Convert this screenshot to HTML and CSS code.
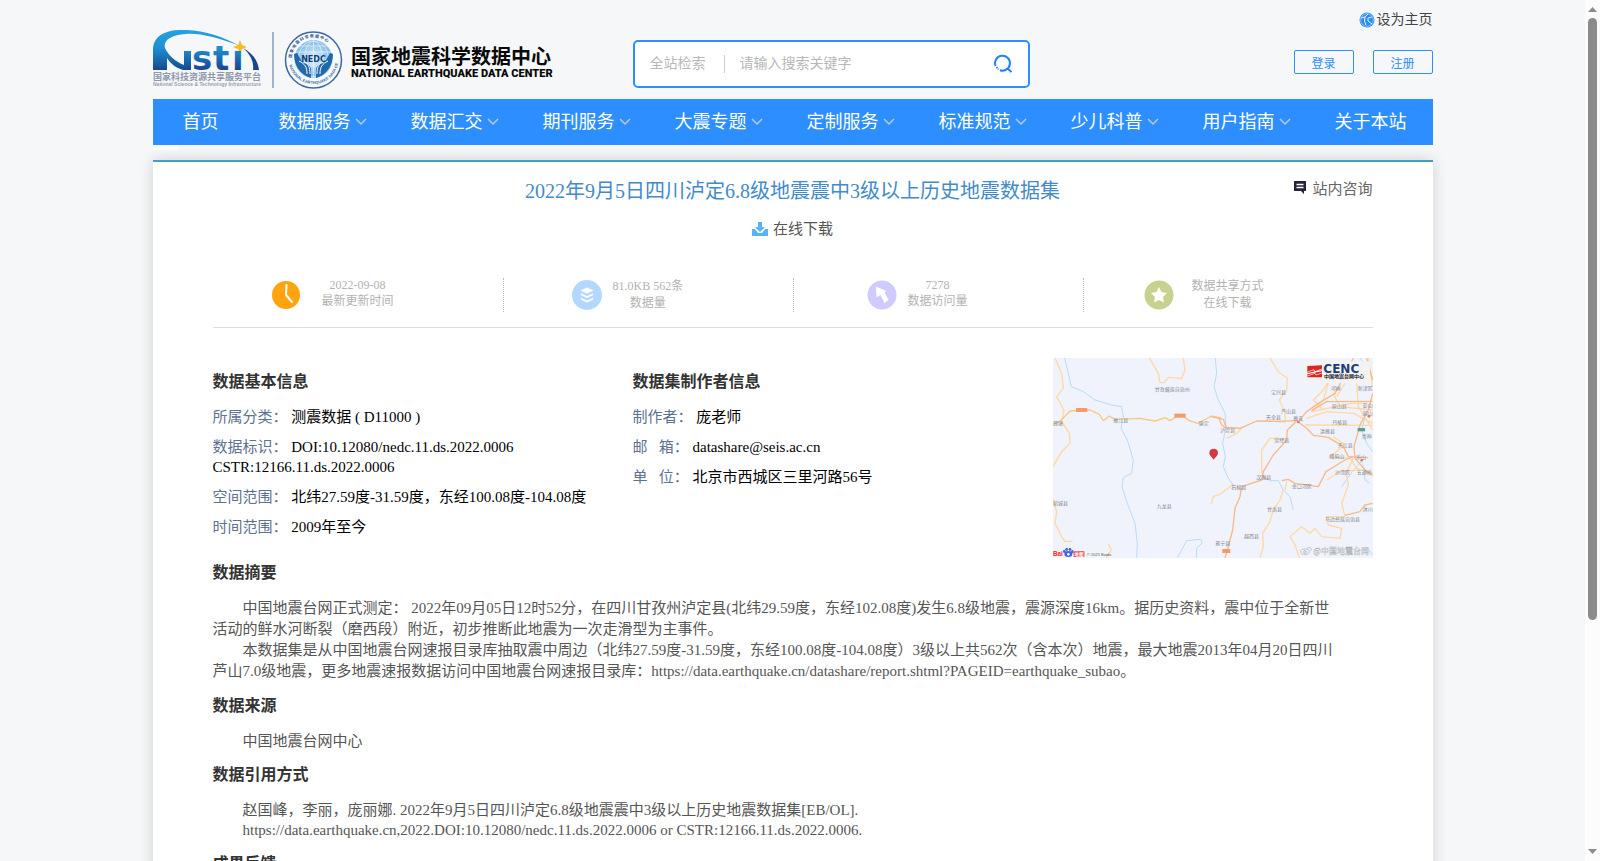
FILE: index.html
```html
<!DOCTYPE html>
<html lang="zh-CN">
<head>
<meta charset="utf-8">
<title>国家地震科学数据中心</title>
<link rel="stylesheet" href="styles.css">
</head>
<body>
<div class="viewport">
<div class="page">
  <header class="header">
    <a class="brand" href="#" aria-label="国家地震科学数据中心">
      <svg class="brand-art" viewBox="0 0 410 60" width="410" height="60" role="img">
        <defs>
          <linearGradient id="swoosh" gradientUnits="userSpaceOnUse" x1="0" y1="0" x2="0" y2="40">
            <stop offset="0" stop-color="#23a3e3"/><stop offset="0.450" stop-color="#1e8fd2"/><stop offset="1" stop-color="#17478f"/>
          </linearGradient>
          <radialGradient id="globe"><stop offset="0" stop-color="#e4f3fb"/><stop offset="1" stop-color="#7dbce4"/></radialGradient>
        </defs>
        <path fill="url(#swoosh)" d="M0 40V18C1 7 10 1 25 0C46 -1 67 5 87 16C66 8 47 3 33 4C17 5 10 11 12 18C15 25 23 32 31 35V21H38V40H30C23 38 17 33 14 28V40Z"/>
        <path fill="#17478f" d="M90 18C99 23 105 30 106 40H100C101 32 98 25 90 18Z"/>
        <path fill="#f5bd22" d="M87 10L89 15L94 17L89 19L87 24L85 19L80 17L85 15Z"/>
        <text class="logo-letters" y="40" fill="url(#swoosh)"><tspan x="39">s</tspan><tspan x="60">t</tspan><tspan x="79">ı</tspan></text>
        <text class="logo-cn" x="0" y="50">国家科技资源共享服务平台</text>
        <text class="logo-en" x="0" y="56">National Science &amp; Technology Infrastructure</text>
        <path stroke="#9fb2cf" stroke-width="2" d="M120 2V58"/>
        <circle cx="160.500" cy="30" r="28" fill="#f8fbfe" stroke="#3d689f" stroke-width="1.500"/>
        <circle cx="160.500" cy="29" r="18.500" fill="url(#globe)" stroke="#8cc1e4"/>
        <g fill="none" stroke="#fff" stroke-width=".7" opacity=".8"><ellipse cx="160.500" cy="29" rx="9" ry="18"/><ellipse cx="160.500" cy="29" rx="15" ry="18"/><path d="M142 22H179M142 36H179M146 16H175M160.500 11V47"/></g>
        <path fill="#2269aa" d="M141 24C141 35 147 45 158 48V39C156 32 150 35 148 30L144 23ZM180 24C180 35 174 45 163 48V39C165 32 171 35 173 30L177 23Z"/>
        <path fill="none" stroke="#fff" stroke-width="1" d="M146 31C152 34 154 37 154 44M150 30C155 33 157 37 157 44M175 31C169 34 167 37 167 44M171 30C166 33 164 37 164 44"/>
        <text class="seal-name" x="160.500" y="32" text-anchor="middle">NEDC</text>
        <path id="seal-top" fill="none" d="M139.500 36A22 22 0 1 1 181.500 36"/>
        <path id="seal-bottom" fill="none" d="M136 34A25 25 0 0 0 185 34"/>
        <text class="seal-ring"><textPath href="#seal-top" startOffset="8">国 家 地 震 科 学 数 据 中 心</textPath></text>
        <text class="seal-ring-en"><textPath href="#seal-bottom" startOffset="1">NATIONAL EARTHQUAKE DATA CENTER</textPath></text>
        <text class="center-cn" x="198" y="34">国家地震科学数据中心</text>
        <text class="center-en" x="198" y="47">NATIONAL EARTHQUAKE DATA CENTER</text>
      </svg>
    </a>
    <form class="search">
      <span class="search-scope">全站检索</span>
      <input class="search-input" type="text" placeholder="请输入搜索关键字" aria-label="请输入搜索关键字">
      <button class="search-button" type="button" aria-label="搜索">
        <svg viewBox="0 0 20 20" width="20" height="20" fill="none" stroke="#2080ff" stroke-width="2"><path d="M2.500 12A7.500 7.500 0 1 1 7 16.300A7.500 7.500 0 0 0 14.500 14.500L18.500 18"/><path d="M3.500 13L5.500 15.500" stroke-dasharray="1.500 1"/></svg>
      </button>
    </form>
    <div class="account">
      <a class="home-link" href="#">
        <svg viewBox="0 0 16 16" width="16" height="16"><circle cx="8" cy="8" r="7.500" fill="#2d8cf0"/><g fill="none" stroke="#e5f3ff" stroke-width="1"><circle cx="8" cy="8" r="6.300" stroke-width=".5"/><path d="M2 6L6 5L9 2M6 5L5.500 9L7 13M9 6L13 5M9 6V9L13 12"/></g></svg>
        <span>设为主页</span>
      </a>
      <div class="account-buttons">
        <button class="outline-button" type="button">登录</button>
        <button class="outline-button" type="button">注册</button>
      </div>
    </div>
  </header>

  <nav class="nav">
    <a class="nav-item" href="#">首页</a>
    <a class="nav-item has-menu" href="#">数据服务<svg class="chevron" viewBox="0 0 12 8"><path d="M1 1L6 6L11 1"/></svg></a>
    <a class="nav-item has-menu" href="#">数据汇交<svg class="chevron" viewBox="0 0 12 8"><path d="M1 1L6 6L11 1"/></svg></a>
    <a class="nav-item has-menu" href="#">期刊服务<svg class="chevron" viewBox="0 0 12 8"><path d="M1 1L6 6L11 1"/></svg></a>
    <a class="nav-item has-menu" href="#">大震专题<svg class="chevron" viewBox="0 0 12 8"><path d="M1 1L6 6L11 1"/></svg></a>
    <a class="nav-item has-menu" href="#">定制服务<svg class="chevron" viewBox="0 0 12 8"><path d="M1 1L6 6L11 1"/></svg></a>
    <a class="nav-item has-menu" href="#">标准规范<svg class="chevron" viewBox="0 0 12 8"><path d="M1 1L6 6L11 1"/></svg></a>
    <a class="nav-item has-menu" href="#">少儿科普<svg class="chevron" viewBox="0 0 12 8"><path d="M1 1L6 6L11 1"/></svg></a>
    <a class="nav-item has-menu" href="#">用户指南<svg class="chevron" viewBox="0 0 12 8"><path d="M1 1L6 6L11 1"/></svg></a>
    <a class="nav-item last" href="#">关于本站</a>
  </nav>
  <div class="nav-marker"></div>

  <main class="card">
    <div class="title-row">
      <h1 class="title">2022年9月5日四川泸定6.8级地震震中3级以上历史地震数据集</h1>
      <a class="consult" href="#">
        <svg viewBox="0 0 14 14" width="14" height="14"><path fill="#262338" d="M1 1H13V11H11V14L8 11H1Z"/><path stroke="#fff" stroke-width="1.500" d="M3.500 4.500H10.500M3.500 7.500H10.500"/></svg>
        <span>站内咨询</span>
      </a>
    </div>
    <a class="download" href="#">
      <svg viewBox="0 0 16 14" width="16" height="14" fill="#56b4f5"><path d="M6 0H10V5H13L8 10L3 5H6Z"/><path d="M0 7H3L6 11H10L13 7H16V14H0Z"/></svg>
      <span>在线下载</span>
    </a>

    <section class="stats">
      <div class="stat stat-time">
        <svg viewBox="0 0 30 30" width="30" height="30"><circle cx="15" cy="15" r="14" fill="#ffa40f"/><path fill="none" stroke="#fff" stroke-width="2" stroke-linecap="round" stroke-linejoin="round" d="M15.500 5L15 15L21 22"/></svg>
        <p>2022-09-08<br>最新更新时间</p>
      </div>
      <div class="stat stat-size">
        <svg viewBox="0 0 30 30" width="30" height="30"><circle cx="15" cy="15" r="15" fill="#b4d7ff"/><path fill="#fff" d="M15 7.500L21.500 10.500L15 13.500L8.500 10.500Z"/><path fill="none" stroke="#fff" stroke-width="1.700" stroke-linecap="round" d="M9.500 14.500L15 17L20.500 14.500M9.500 19L15 21.500L20.500 19"/></svg>
        <p>81.0KB 562条<br>数据量</p>
      </div>
      <div class="stat stat-visits">
        <svg viewBox="0 0 30 30" width="30" height="30"><circle cx="15" cy="15" r="14.500" fill="#cfcbff"/><path fill="#fff" d="M9 6.500L19.500 11L17.500 12.500L21.500 20L17.500 23L13.500 15L9.500 17.500Z"/></svg>
        <p>7278<br>数据访问量</p>
      </div>
      <div class="stat stat-share">
        <svg viewBox="0 0 30 30" width="30" height="30"><circle cx="15" cy="15" r="14.500" fill="#c9d18f"/><path fill="#fff" d="M15 7L17.500 12L23 13L19 17L20 22.500L15 20L10 22.500L11 17L7 13L12.500 12Z"/></svg>
        <p>数据共享方式<br>在线下载</p>
      </div>
    </section>

    <div class="info">
      <section class="info-basic">
        <h2 class="heading">数据基本信息</h2>
        <p class="field"><span class="label">所属分类：</span> 测震数据 ( D11000 )</p>
        <p class="field"><span class="label">数据标识：</span> DOI:10.12080/nedc.11.ds.2022.0006<br>CSTR:12166.11.ds.2022.0006</p>
        <p class="field"><span class="label">空间范围：</span> 北纬27.59度-31.59度，东经100.08度-104.08度</p>
        <p class="field"><span class="label">时间范围：</span> 2009年至今</p>
      </section>
      <section class="info-author">
        <h2 class="heading">数据集制作者信息</h2>
        <p class="field"><span class="label">制作者：</span> 庞老师</p>
        <p class="field"><span class="label">邮&nbsp;&nbsp; 箱：</span> datashare@seis.ac.cn</p>
        <p class="field"><span class="label">单&nbsp;&nbsp; 位：</span> 北京市西城区三里河路56号</p>
      </section>
      <svg class="map" viewBox="39 24 960 600" role="img" aria-label="震中位置地图">
        <rect x="39" y="24" width="960" height="600" fill="#f0f3fb"/>
        <g fill="none" stroke="#b5dcfa" stroke-width="3" stroke-linejoin="round">
          <path d="M74 24L85 70L94 110L130 125L165 150L215 165L245 170L250 200L243 235L262 270L280 330L275 370L250 382L246 410L262 460L285 520L292 580L290 624"/>
          <path d="M526 24L530 70L522 110L535 150L555 190L558 230L548 280L556 320L550 350L565 385L580 405"/>
          <path d="M668 375L690 392L715 392L728 418L750 440L760 480M412 624L440 572L482 568L487 578L470 595V624"/>
          <path d="M905 410L940 360L965 335M968 340L975 390L990 400M975 200L965 240L980 280L998 305M960 24L985 60M980 590L998 615"/>
        </g>
        <g fill="none" stroke="#ffd8a3" stroke-width="4" stroke-linejoin="round">
          <path d="M45 24L65 70L70 115L50 140L72 180L65 215L88 250L90 280L65 305L39 350"/>
          <path d="M328 24L355 70L360 97L372 98L385 82L425 85L435 60L430 24"/>
          <path d="M690 24L715 65L742 85L740 120L718 150L735 185L735 215M850 180L820 150L850 120L865 95M865 100L850 150L815 185L885 170L935 160L980 160M880 130L900 170L998 180M915 100L890 140M950 100L955 170L998 240M800 205L860 185L940 190L998 220M795 225L998 226"/>
          <path d="M560 233L605 235L590 250L560 265M735 217L710 215M735 265L690 265L665 300L665 370M580 402L545 430L520 440L514 462"/>
          <path d="M730 418L720 450L700 480L690 515L668 550L670 590L660 624M740 395L735 420M860 390L900 365L960 360M940 325L918 370L925 405L905 460L915 500L860 500L865 525L905 535L900 565L845 560L825 535L810 550L785 530L750 560L765 585L778 624"/>
          <path d="M39 445L50 485L45 520L65 560L75 575L98 574M205 582L214 600L198 624M985 24L998 110M880 260L915 285L870 320L930 325L950 355L998 370"/>
        </g>
        <g fill="none" stroke="#f8b98a" stroke-width="4" stroke-linejoin="round">
          <path stroke="#f8c880" d="M39 223L62 212L90 183L150 180L178 193L190 212L208 198L225 209L300 205L345 213L375 203L390 212L420 193L448 212L473 220L515 198L545 205"/>
          <path d="M513 200L550 208L558 232L600 235L650 213L710 214L770 212L800 235L820 256L865 262L910 290L925 320L985 323"/>
          <path d="M535 200L545 225L560 235M768 215L742 240L740 270L700 315L670 365L665 390L605 410L600 440L585 475L578 540L565 590L555 624"/>
          <path d="M665 375L682 390M725 392L745 388L765 400L835 410L858 365L915 330L940 320M777 212L800 185L835 160L885 130L930 45L940 24M815 182L860 155L998 154M998 130L985 180L960 225L942 290L945 325L980 365L998 376"/>
          <path d="M998 460L975 465L960 485L915 496M980 24L998 90"/>
        </g>
        <g fill="#f49b6a"><rect x="108" y="174" width="34" height="12"/><rect x="403" y="191" width="34" height="12"/><rect x="547" y="597" width="24" height="12"/></g>
        <rect x="953" y="234" width="22" height="10" fill="#5d9d92"/>
        <g class="map-text">
          <text x="344" y="124">甘孜藏族自治州</text><text x="693" y="131">宝兴县</text><text x="723" y="189">芦山县</text><text x="678" y="208">天全县</text><text x="760" y="211">雅安</text><text x="875" y="175">眉山县</text><text x="877" y="221">丹棱县</text><text x="220" y="216">雅江县</text><text x="476" y="224">康定</text><text x="541" y="246">泸定县</text><text x="703" y="276">荥经县</text><text x="840" y="248">洪雅县</text><text x="893" y="291">夹江县</text><text x="868" y="324">峨眉山</text><text x="948" y="327">乐山</text><text x="885" y="372">沙湾区</text><text x="950" y="372">五通桥</text><text x="649" y="388">汉源县</text><text x="574" y="417">石棉县</text><text x="755" y="413">金口河区</text><text x="350" y="473">九龙县</text><text x="681" y="484">甘洛县</text><text x="855" y="514">马边彝族自治县</text><text x="612" y="563">越西县</text><text x="526" y="584">冕宁县</text><text x="39" y="465">稻城县</text><text x="39" y="225">理塘</text><text x="872" y="121">邛崃</text><text x="953" y="121">新津区</text><text x="968" y="172">彭山</text><text x="968" y="196">眉山</text><text x="965" y="265">青神</text><text x="968" y="482">沐川</text>
        </g>
        <g fill="#ed725a"><circle cx="775" cy="216" r="4"/><circle cx="965" cy="331" r="4"/><circle cx="987" cy="199" r="4"/></g>
        <path fill="#d43a3b" d="M521 329C514 318 508 316 508 308A13 12 0 0 1 534 308C534 316 527 320 521 329Z"/>
        <rect x="783" y="34" width="207" height="65" fill="#f3f3f2"/>
        <path fill="#d92523" d="M802 48L846 46V60L802 69ZM802 73L846 64V82H802Z"/><path fill="none" stroke="#fff" stroke-width="2" d="M802 66L822 59L824 65L846 57M802 78L825 70L828 75L846 69"/>
        <text class="map-brand" x="850" y="68">CENC</text><text class="map-brand-cn" x="852" y="85">中国地震台网中心</text>
        <text class="map-baidu" x="39" y="619">Bai</text><g fill="#4163e6"><ellipse cx="85" cy="612" rx="12" ry="9"/><ellipse cx="73" cy="604" rx="4" ry="5"/><ellipse cx="80" cy="598" rx="4" ry="5"/><ellipse cx="90" cy="598" rx="4" ry="5"/><ellipse cx="97" cy="605" rx="4" ry="5"/></g><circle cx="85" cy="613" r="4" fill="#fff"/>
        <rect x="101" y="604" width="32" height="17" fill="#e2302c"/><text class="map-baidu-cn" x="103" y="618">地图</text><text class="map-copy" x="141" y="618">© 2021 Baidu</text>
        <g fill="none" stroke="#bdc0c5" stroke-width="3"><ellipse cx="795" cy="605" rx="13" ry="8"/><circle cx="795" cy="606" r="4"/><path d="M802 594C810 590 816 596 813 602"/></g>
        <text class="map-watermark" x="820" y="612">@中国地震台网</text>
      </svg>
    </div>

    <section class="block abstract">
      <h2 class="heading">数据摘要</h2>
      <p class="text">中国地震台网正式测定： 2022年09月05日12时52分，在四川甘孜州泸定县(北纬29.59度，东经102.08度)发生6.8级地震，震源深度16km。据历史资料，震中位于全新世活动的鲜水河断裂（磨西段）附近，初步推断此地震为一次走滑型为主事件。</p>
      <p class="text">本数据集是从中国地震台网速报目录库抽取震中周边（北纬27.59度-31.59度，东经100.08度-104.08度）3级以上共562次（含本次）地震，最大地震2013年04月20日四川芦山7.0级地震，更多地震速报数据访问中国地震台网速报目录库：https://data.earthquake.cn/datashare/report.shtml?PAGEID=earthquake_subao。</p>
    </section>
    <section class="block">
      <h2 class="heading">数据来源</h2>
      <p class="text">中国地震台网中心</p>
    </section>
    <section class="block">
      <h2 class="heading">数据引用方式</h2>
      <p class="text">赵国峰，李丽，庞丽娜. 2022年9月5日四川泸定6.8级地震震中3级以上历史地震数据集[EB/OL].</p>
      <p class="text">https://data.earthquake.cn,2022.DOI:10.12080/nedc.11.ds.2022.0006 or CSTR:12166.11.ds.2022.0006.</p>
    </section>
    <section class="block">
      <h2 class="heading">成果反馈</h2>
    </section>
  </main>
</div>
</div>
<div class="scrollbar" aria-hidden="true">
  <svg class="scroll-arrow" viewBox="0 0 9 5"><path d="M4.500 0L9 5H0Z"/></svg>
  <div class="scroll-track"><div class="scroll-thumb"></div></div>
  <svg class="scroll-arrow" viewBox="0 0 9 5"><path d="M0 0H9L4.500 5Z"/></svg>
</div>
</body>
</html>
```
FILE: styles.css
```css
* { box-sizing: border-box; }
body {
  display: flex;
  height: 100vh;
  margin: 0;
  overflow: hidden;
  background: #f5f7f9;
  color: #000;
  font-family: "Liberation Serif", "Noto Sans CJK SC", serif;
  font-size: 15px;
}
h1, h2, p { margin: 0; }
a { color: inherit; text-decoration: none; }
button { font-family: inherit; cursor: pointer; }

.viewport { flex: 1; min-width: 0; overflow: auto; scrollbar-width: none; }
.page { max-width: 1280px; margin: 0 auto; }

.scrollbar {
  display: flex;
  flex-direction: column;
  align-items: center;
  gap: 6px;
  width: 15px;
  padding: 7px 0;
  background: #fcfcfc;
}
.scroll-arrow { flex: none; width: 9px; height: 5px; fill: #8b8b8b; }
.scroll-track { flex: 1; width: 9px; }
.scroll-thumb { height: 73%; border-radius: 5px; background: #8b8b8b; }

.header { display: flex; align-items: flex-start; height: 99px; }
.brand { margin-top: 30px; flex: none; }
.brand-art { display: block; }
.logo-letters { font: bold 34px "DejaVu Sans", sans-serif; }
.logo-cn { font: bold 9px "Noto Sans CJK SC", sans-serif; fill: #9099ab; }
.logo-en { font: bold 5px "Liberation Sans", sans-serif; fill: #9aa2b3; }
.seal-name { font: bold 8px "DejaVu Sans", sans-serif; fill: #123e7c; }
.seal-ring { font: bold 4px "Noto Sans CJK SC", sans-serif; fill: #2b568f; }
.seal-ring-en { font: bold 4px "Liberation Sans", sans-serif; fill: #3d689f; }
.center-cn { font: bold 20px "Noto Sans CJK SC", sans-serif; fill: #0a0a0a; }
.center-en { font: 900 11px Roboto, sans-serif; fill: #0a0a0a; }

.search {
  display: flex;
  align-items: center;
  width: 397px;
  height: 48px;
  margin: 40px 0 0 70px;
  padding: 0 15px;
  background: #fff;
  border: 2px solid #2d8fff;
  border-radius: 5px;
}
.search-scope {
  padding-right: 18px;
  border-right: 1px solid #ccc;
  color: #b5b8bb;
  font-size: 14px;
  line-height: 18px;
}
.search-input {
  flex: 1;
  min-width: 0;
  padding: 0 0 0 15px;
  border: 0;
  outline: 0;
  background: none;
  font-family: inherit;
  font-size: 14px;
}
.search-input::placeholder { color: #b5b8bb; }
.search-button { display: flex; padding: 0; border: 0; background: none; }

.account { display: flex; flex-direction: column; align-items: flex-end; margin-left: auto; }
.home-link { display: flex; align-items: center; gap: 2px; margin-top: 10px; color: #444; font-size: 14px; line-height: 20px; }
.account-buttons { display: flex; gap: 19px; margin-top: 20px; }
.outline-button {
  width: 60px;
  height: 24px;
  padding: 2px 0 0;
  background: none;
  border: 1px solid #2d8fff;
  border-radius: 2px;
  color: #2d8fff;
  font-size: 12px;
}

.nav { position: relative; display: flex; height: 46px; background: #2d8fff; color: #fff; font-size: 18px; line-height: 46px; }
.nav-item { padding: 0 30px; white-space: nowrap; }
.has-menu { display: flex; align-items: center; gap: 4px; padding-right: 14px; }
.last { padding-right: 0; }
.chevron { width: 12px; height: 8px; fill: none; stroke: #bcc8d6; stroke-width: 1.5; }
.nav-marker { width: 26px; height: 3px; margin: 2px 0 10px; background: #fff; }

.card {
  padding: 0 60px 300px;
  background: #fff;
  border-top: 2px solid #3aa3c4;
  box-shadow: 0 0 14px rgba(0, 0, 0, 0.16);
}
.title-row { display: grid; grid-template-columns: 1fr auto 1fr; padding-top: 14px; }
.title { grid-column: 2; color: #428bca; font-size: 20px; font-weight: normal; line-height: 30px; }
.consult { display: flex; align-items: center; justify-self: end; gap: 5px; height: 22px; color: #666; }
.download { display: flex; align-items: center; justify-content: center; gap: 5px; margin-top: 12px; color: #555; line-height: 22px; }

.stats { display: grid; grid-template-columns: repeat(4, 1fr); margin-top: 38px; padding-bottom: 15px; border-bottom: 1px solid #ddd; }
.stat { display: flex; align-items: center; height: 34px; color: #b2b2b2; font-size: 12px; line-height: 16px; text-align: center; }
.stat + .stat { border-left: 1px dotted #bbb; }
.stat-time { gap: 21px; padding-left: 58px; }
.stat-size { gap: 11px; padding-left: 68px; }
.stat-visits { gap: 11px; padding-left: 73px; }
.stat-share { gap: 18px; padding-left: 60px; }
.stat-time p, .stat-visits p { padding-bottom: 4px; }
.stat-size p, .stat-share p { line-height: 17px; }

.info { display: grid; grid-template-columns: 420px 1fr 320px; margin-top: 30px; }
.heading { color: #333; font-size: 16px; font-weight: bold; line-height: 22px; }
.info .heading { margin: 13px 0 14px; }
.field { margin-bottom: 10px; line-height: 20px; }
.label { color: #5d7190; }
.map { display: block; width: 100%; height: 200px; }
.map-text { font: 15px "Noto Sans CJK SC", sans-serif; fill: #858891; }
.map-brand { font: bold 36px "DejaVu Sans", sans-serif; fill: #1c3f78; }
.map-brand-cn { font: bold 15px "Noto Sans CJK SC", sans-serif; fill: #222; }
.map-baidu { font: bold 19px "Liberation Sans", sans-serif; fill: #e2302c; }
.map-baidu-cn { font: bold 14px "Noto Sans CJK SC", sans-serif; fill: #fff; }
.map-copy { font: 12px "Liberation Sans", sans-serif; fill: #555; }
.map-watermark { font: 24px "Noto Sans CJK SC", sans-serif; fill: #fff; stroke: #aaaeb5; stroke-width: 1; }

.block { margin-top: 13px; }
.info + .block { margin-top: 4px; }
.block .heading { margin-bottom: 14px; }
.text { padding-right: 34px; color: #555; line-height: 20px; text-indent: 2em; }
.abstract .text { line-height: 21px; }
```
